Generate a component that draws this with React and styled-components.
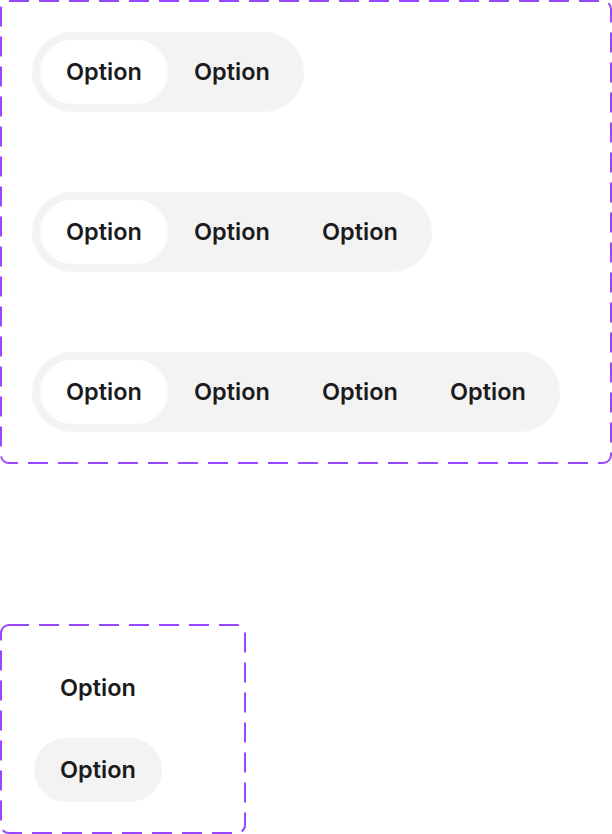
import React from "react";
import styled, { createGlobalStyle } from "styled-components";

const Global = createGlobalStyle`
  html, body { margin: 0; padding: 0; background: #ffffff; }
  body { font-family: Inter, "Noto Sans", sans-serif; }
  * { box-sizing: border-box; }
`;

const Page = styled.div`
  width: 612px;
  display: flex;
  flex-direction: column;
  align-items: flex-start;
  gap: 160px;
`;

const Frame = styled.div`
  position: relative;
  width: ${(p) => p.$w}px;
  height: ${(p) => p.$h}px;
  padding: ${(p) => p.$pad};
  display: flex;
  flex-direction: column;
  align-items: flex-start;
  gap: ${(p) => p.$gap}px;
`;

const DashSvg = styled.svg`
  position: absolute;
  inset: 0;
  width: 100%;
  height: 100%;
  pointer-events: none;
  overflow: visible;
`;

const DashRect = styled.rect`
  x: 1px;
  y: 1px;
  width: calc(100% - 2px);
  height: calc(100% - 2px);
  rx: 8px;
  ry: 8px;
  fill: none;
  stroke: #9747ff;
  stroke-width: 2;
  stroke-dasharray: 20 10;
`;

const Segmented = styled.div`
  display: flex;
  padding: 8px;
  border-radius: 40px;
  background: #f3f3f3;
`;

const Item = styled.div`
  width: 128px;
  height: 64px;
  padding-bottom: 0px;
  border-radius: 32px;
  display: flex;
  align-items: center;
  justify-content: center;
  font-family: Inter, "Noto Sans", sans-serif;
  font-size: 23.5px;
  font-weight: 570;
  line-height: 1;
  color: #1b1b1b;
  background: ${(p) => (p.$active ? "#ffffff" : "transparent")};
  ${(p) => p.$hover && "background: #f3f3f3;"}
`;

function DashedBorder() {
  return (
    <DashSvg>
      <DashRect />
    </DashSvg>
  );
}

export default function App() {
  const counts = [2, 3, 4];
  return (
    <>
      <Global />
      <Page>
        <Frame $w={612} $h={464} $pad="32px" $gap={80}>
          <DashedBorder />
          {counts.map((n) => (
            <Segmented key={n}>
              {Array.from({ length: n }).map((_, i) => (
                <Item key={i} $active={i === 0}>
                  Option
                </Item>
              ))}
            </Segmented>
          ))}
        </Frame>
        <Frame $w={246} $h={210} $pad="32px 84px 32px 34px" $gap={18}>
          <DashedBorder />
          <Item>Option</Item>
          <Item $hover>Option</Item>
        </Frame>
      </Page>
    </>
  );
}
